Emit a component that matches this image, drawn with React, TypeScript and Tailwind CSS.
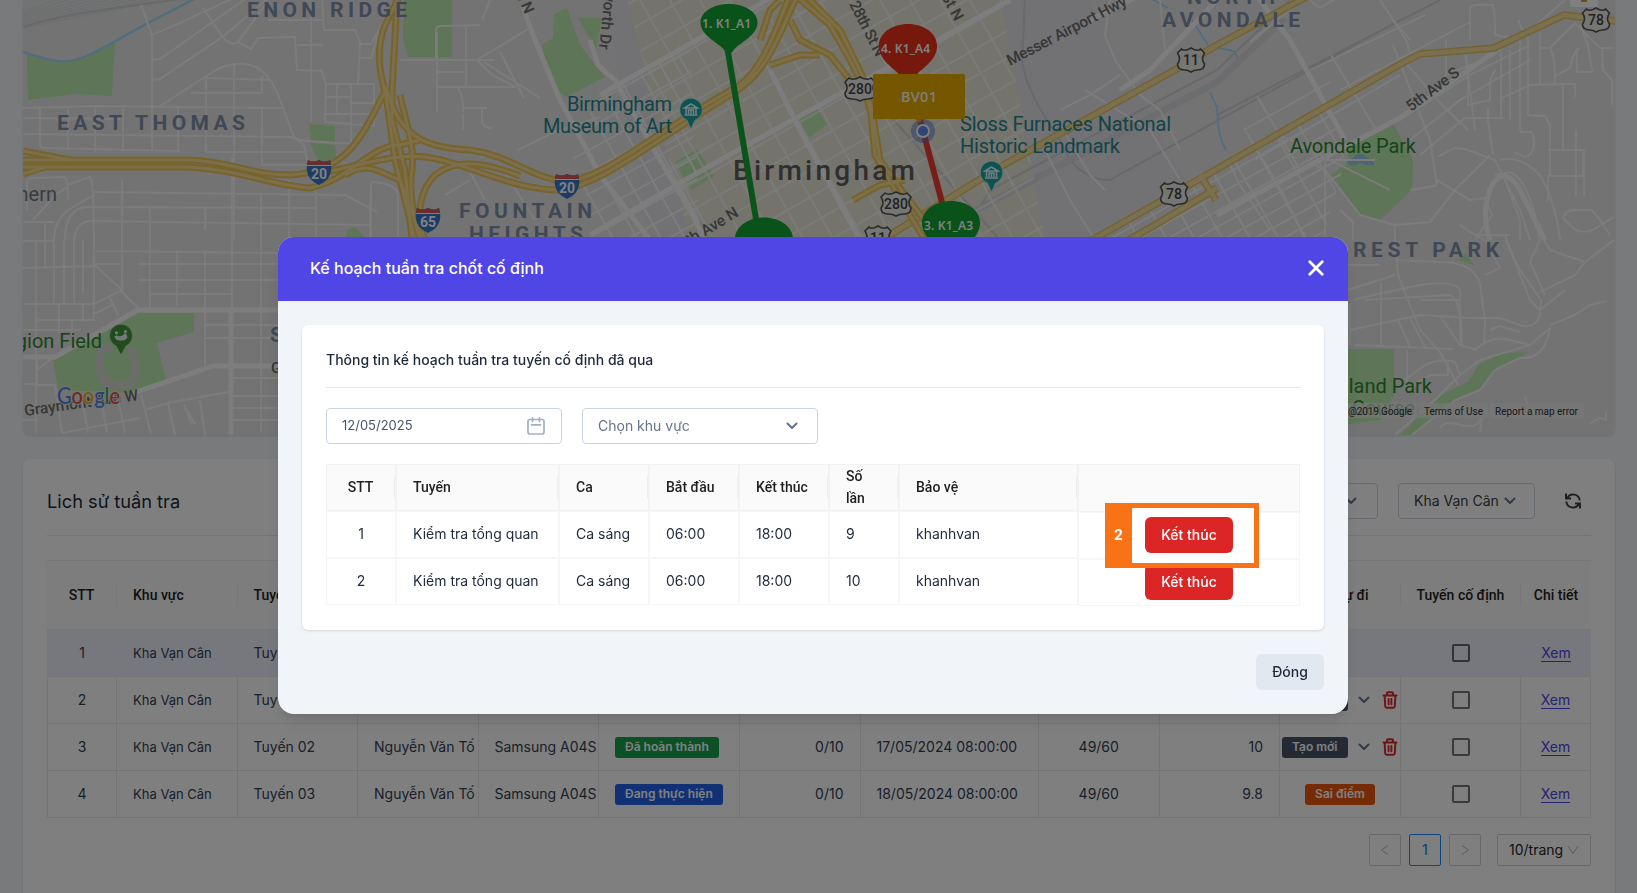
import React from "react";

const fan = (n: number, f: (i: number) => string) => Array.from({ length: n }, (_, i) => f(i)).join(" ");

const INTERSTATES: [string, number, number][] = [["20", 319, 172], ["20", 567, 186], ["65", 428, 220]];
const US_ROUTES: [string, number, number, number][] = [
  ["280", 860, 89, 30], ["280", 896, 204, 30], ["11", 878, 238, 26], ["11", 1191, 60, 27], ["78", 1174, 194, 27], ["78", 1596, 20, 27],
];

const MINOR_ROADS = [
  "M152 35V150", "M152 35L141 5", "M152 35L182 22L240 -5", "M152 60L160 59L248 -3", "M152 80L160 79L225 35L270 -3",
  "M203 8L222 36Q230 47 238 42L265 5", "M238 42L251 49L258 38L295 37L297 70L322 71L326 85L325 122L374 126L374 84L326 84",
  "M268 20H322M311 0V122M322 0L324 30L355 30L360 42L358 85M360 44L371 44L390 10M358 58L371 58L378 34M297 45H323",
  "M160 106L205 77Q225 62 245 64Q268 66 280 100L294 137L304 145L308 163M205 78L270 80M234 64V240M206 78V152M191 93H262V76",
  "M23 108L95 106L282 108M23 118L120 119M23 134L290 137L305 141L356 144M40 108V145Q40 148 45 148L180 151M68 107V150M95 107V152M123 108V152M178 108V152M262 109V165M261 165H308M206 152H305",
  "M337 85V114M351 85V150M326 97H351M351 103H375M326 114H374",
  "M27 210V182Q27 178 35 178L64 177Q68 177 68 200M67 185L90 177Q94 180 94 250",
  "M33 220L55 195L68 187M54 240Q54 222 68 210L94 195M65 240Q65 210 85 207L315 208M74 240Q76 222 90 221L370 225",
  "M94 192L345 195L377 212M205 208Q206 215 205 230M122 180V240M150 205V310M177 250V306M205 250V366M232 158V435M261 195V366M289 180V240M316 190V240M371 183V240",
  "M23 222H54M45 222V240M398 240V195Q396 183 372 182Q370 184 370 240",
  "M23 241H54V250M94 230V305M94 251L278 253M94 264H122M138 264H278M138 280H278M150 294H232M122 240V292L138 308M23 268L96 266L122 290",
  "M23 304H94L122 290M36 241V433M45 240V268M54 250V304M64 240V304M74 240V304M83 240V293M38 320H94V305M59 304V333M83 304V322M23 330H80M72 320V335M110 298L118 315M94 314L112 305",
  "M23 384H37V356M37 370L52 358M23 420H38M37 385L55 385L62 433M82 398L88 433M100 393L107 433M118 398L125 433M62 433L140 418",
  "M141 395L150 430L152 433M145 410L168 403L175 435M168 403L228 392M200 400L205 435M187 410L195 424M184 405L192 425M205 325H278M205 338H278M232 378H278M232 396H278M232 408H278M232 420H278M261 366V433",
  "M436 60V30Q436 26 441 26L480 25M400 60H495M437 32V112M466 26V86M477 60L492 75L516 87M437 72H466M437 87H515M457 87Q463 92 463 112M463 108H487M463 130V114M482 109V120Q482 128 492 128",
  "M490 0L482 20M477 60L530 28M484 62L540 98M500 52L524 98M518 150L555 132L600 117M500 165L535 220M430 183L440 172Q460 165 470 172L485 200M445 195L470 180",
  "M1110 0L1105 35L1115 60L1140 95L1160 110L1180 150M1160 0L1165 50M1120 75L1090 95L1060 110M1085 90L1150 130L1180 180M1060 125L1090 175L1105 190M1040 140L1070 200L1095 240",
  "M1380 0L1406 40L1412 60M1393 20L1410 40M1310 0L1320 8L1340 -4M1250 42L1302 0M1331 55L1375 128M1257 96L1300 170M1244 128L1284 195L1305 240M1230 165L1240 185L1270 230",
  "M1310 70L1425 15M1340 90L1470 22M1244 130L1330 82M1255 160L1400 75M1280 135L1390 190M1405 62L1442 105L1468 130",
  "M1393 45L1430 140L1437 185M1405 60L1465 50L1475 130M1446 40V75L1495 55M1470 40V10Q1470 5 1477 5L1492 5Q1495 6 1495 35L1512 38",
  "M1400 120L1470 75L1530 45M1410 140L1460 100L1530 60M1420 155L1465 118H1505M1468 70V105L1490 100V80L1495 70M1501 52V118M1510 50V120M1520 35V130",
  "M1528 32V115L1545 116L1550 125V175M1540 32V84M1502 98L1530 85L1563 84V150M1518 20L1525 35L1565 0M1541 48L1550 48L1575 23L1600 48H1614M1550 48Q1555 55 1555 83",
  "M1577 48V72H1592L1588 45L1580 25M1602 48L1603 70L1612 80V105M1555 76L1570 68Q1574 50 1580 48M1564 84H1575V97M1576 130V197M1584 150V197M1548 150H1583V176H1548M1548 176V201M1520 132H1530Q1534 132 1534 145Q1532 156 1525 157L1515 152",
  "M1437 157L1455 148L1465 149L1495 160L1520 210L1530 240M1488 108V120L1493 155M1436 185L1413 190M1375 160L1325 160M1325 162V240M1315 165L1325 170L1360 215L1395 225L1430 222L1455 190L1490 155",
  "M1410 190L1436 186L1437 180L1470 200L1485 198L1492 215L1475 240M1495 175L1510 172Q1530 180 1540 240M1500 160Q1520 155 1540 175Q1555 200 1560 240M1505 180L1520 220V240M1340 210L1353 222V240M1460 225L1475 235H1510",
  "M1563 218Q1565 210 1575 210H1592L1600 220L1610 235M1563 218L1575 230Q1590 235 1600 225L1614 217M1395 225V240",
  "M1395 240L1398 275L1420 330L1440 352L1458 385M1348 290L1395 275M1348 265H1380M1354 300L1360 298L1420 285Q1455 280 1460 290L1460 345L1477 350",
  "M1350 330L1420 315L1470 318L1500 318L1520 325Q1535 330 1540 315L1541 300L1520 270L1505 240M1381 283V345M1355 345L1453 349M1350 303V345M1365 300L1450 295Q1462 300 1462 345",
  "M1395 260L1440 262Q1475 262 1480 285L1485 320L1484 345M1485 275L1500 268L1485 240L1470 232M1440 316L1460 345M1398 320L1410 347M1410 318L1425 347M1420 300L1460 300",
  "M1475 350Q1490 335 1510 340L1530 345L1550 328M1490 330L1500 326L1520 332M1505 235L1520 275L1530 300L1540 310L1565 290M1540 292L1575 275L1585 262L1614 240M1535 225L1550 250L1585 262M1540 240L1530 262L1545 295",
  "M1550 325L1575 315L1590 305L1607 301M1405 380L1425 365Q1440 358 1455 362L1460 375M1407 350V385M1407 390L1430 375H1448V362M1530 345L1480 360L1460 375L1435 400L1395 435",
  "M1550 328Q1545 360 1520 358L1495 370L1480 390L1455 400L1412 435M1440 428Q1445 420 1460 425Q1480 430 1482 415L1480 433M1525 396L1530 415M1590 424Q1600 415 1606 420V412",
];

const MAIN_ROADS = [
  "M522 5L535 40L560 100L600 175L650 240", "M590 40L598 65L615 80L660 160L690 210L705 240", "M600 95L820 -30", "M590 235L720 160L1010 0",
  "M1256 -5L1290 40L1345 140", "M1217 215L1320 160L1400 118L1500 48", "M138 310H278", "M23 357H55L138 310", "M278 366H213L133 393", "M231 310V435",
  "M1217 0L1150 70L1120 90", "M1090 20L1160 -15", "M770 70L800 130L860 240", "M1490 240Q1480 210 1492 185Q1505 165 1520 190L1545 240",
];

const HIGHWAYS = [
  "M23 151L70 160", "M23 160H190C230 161 250 175 290 175C350 173 365 130 388 85",
  "M23 167H190C240 170 270 185 310 188C350 180 370 145 400 145L420 140", "M23 174L45 167",
  "M400 -5L385 25C375 50 380 75 386 95L395 160L415 240", "M397 0L392 90L392 120L405 170L412 240",
  "M325 172C350 168 370 160 400 157C450 150 500 190 560 190C600 185 640 150 735 92C770 70 780 30 798 -5",
  "M387 90C400 140 430 148 470 150C510 155 530 178 567 182C610 175 650 135 740 85C765 65 775 30 790 -5",
  "M345 175C370 160 380 173 400 180L422 240", "M400 95C405 120 415 145 412 170C408 190 415 225 420 240", "M425 240C415 215 420 190 435 175C455 160 480 160 520 176",
  "M760 40L770 10L780 0", "M790 20L800 40L830 55L850 80", "M770 65L800 55H820",
  "M795 -5L830 25L850 60L865 90L871 115L875 155L895 190L925 240", "M805 -5L840 30L862 75L872 110L880 160L905 195L940 240",
  "M853 200L880 185L905 180",
];

const US_HIGHWAYS = ["M1308 -4L1217 45L1175 70L1000 167L885 238", "M1616 21L1564 15L1494 48L1447 52L1420 54L1404 62L1217 169L1133 217L1085 244", "M1217 188L1150 228L1125 242", "M1200 175L1216 200"];

const PARKS = [
  "M27 54L65 62L85 56L115 42L112 96L75 94L28 100Z", "M404 0H452V57H408L403 40Z", "M554 14L567 8L580 45L605 77L567 97L552 88L542 45L553 38Z",
  "M578 18H602L596 50Z", "M309 124L335 126V142L311 140ZM310 143L335 145L337 163L318 160Z", "M675 162L697 149L714 176L691 190L681 173Z", "M799 119L817 109L827 124L809 138Z",
  "M1393 123L1413 160L1412 190L1380 220L1361 215L1331 175L1350 160L1345 145Z", "M53 360L107 330L138 313H194V332L157 343L166 380L133 393L58 390Z",
  "M1348 349H1394V395L1380 420L1348 424Z", "M1400 435L1440 395L1468 382L1478 365L1500 353L1530 352L1500 366L1480 390L1455 400L1412 435Z", "M1458 260L1465 253L1475 266ZM347 230L355 227L367 240H347Z",
];

function InterstateShield({ label, x, y }: { label: string; x: number; y: number }) {
  return (
    <g transform={`translate(${x} ${y})`}>
      <path d="M-11 -12Q-6 -9 0 -12Q6 -9 11 -12Q13 -5 12 -1Q11 8 0 13Q-11 8 -12 -1Q-13 -5 -11 -12Z" fill="#3878d0" />
      <path d="M-11 -12Q-6 -9 0 -12Q6 -9 11 -12L12 -7H-12Z" fill="#d85858" />
      <path d="M-12 -6.5H12" stroke="#fff" strokeWidth="1" />
      <text y="7" textAnchor="middle" fontSize="14" fontWeight="700" fill="#fff">{label}</text>
    </g>
  );
}

function RouteShield({ label, x, y, w }: { label: string; x: number; y: number; w: number }) {
  const h = w / 2;
  return (
    <g transform={`translate(${x} ${y})`}>
      <path
        d={`M${-h + 4} -11Q${-h / 2} -8 0 -12Q${h / 2} -8 ${h - 4} -11L${h} -7Q${h - 4} -1 ${h} 4Q${h} 10 ${h - 7} 10Q3 10 0 12Q-3 10 ${-h + 7} 10Q${-h} 10 ${-h} 4Q${-h + 4} -1 ${-h} -7Z`}
        fill="#ededE8" stroke="#555" strokeWidth="1.6"
      />
      <text y="5" textAnchor="middle" fontSize="14" fontWeight="500" fill="#444">{label}</text>
    </g>
  );
}

function Museum({ x, y }: { x: number; y: number }) {
  return (
    <g transform={`translate(${x} ${y})`}>
      <path d="M0 19L-4 10A11.2 11.2 0 1 1 4 10Z" fill="#18a8a8" stroke="#d5eeee" strokeWidth="0.6" />
      <path d="M-6.500 -2L0 -6L6.500 -2ZM-6.500 5H6.500M-5 -2V4M5 -2V4M-2.500 4V0H2.500V4M0 0V4" fill="none" stroke="#e8ffff" strokeWidth="1.500" />
    </g>
  );
}

function RoutePin({ x, y, label, color, tall = true }: { x: number; y: number; label: string; color: string; tall?: boolean }) {
  return (
    <g transform={`translate(${x} ${y})`}>
      <path
        transform={tall ? "scale(1.02 1.19)" : undefined}
        d="M-28.500 0C-28.500 -11 -15 -18.500 0 -18.500S28.500 -11 28.500 0C28.500 13 11 20 5 27Q3 31 0 31T-5 27C-11 20 -28.500 13 -28.500 0Z"
        fill={color}
      />
      <text x="-27" y={tall ? 6.5 : 5.5} fontFamily="Noto Sans" fontSize="12" fontWeight="600" fill="#fff" textLength="49">{label}</text>
    </g>
  );
}

function CityMap() {
  return (
    <svg viewBox="23 0 1592 435" width="1592" height="435" className="block rounded-b-lg bg-[#e7e7e7]" fontFamily="Roboto, sans-serif">
      <defs>
        <clipPath id="grid-west"><path d="M600 95L690 45L700 240H600L570 150Z" /></clipPath>
        <clipPath id="downtown"><path d="M627 0H1001L1045 240H690Z" /></clipPath>
        <clipPath id="grid-south"><path d="M1217 170L1330 108L1345 160L1322 240H1100Z" /></clipPath>
      </defs>
      <path d="M605 0H627L700 240H650Z M1001 0H1090L1217 240H1045Z" fill="#e4e4ea" />
      <path d="M627 0H1001L1045 240H690Z" fill="#e8e6d8" />
      {PARKS.map((d) => <path key={d} d={d} fill="#bdecae" />)}
      <path d="M23 52C40 57 55 63 68 61C90 58 105 46 150 22L200 -4" fill="none" stroke="#a4dcfa" strokeWidth="2.500" />
      <path d="M1150 -2L1168 8M1192 20L1208 45M1210 92L1217 108L1219 120M1218 48L1234 51L1240 61M1217 105Q1217 135 1226 150" fill="none" stroke="#a4dcfa" strokeWidth="1.800" />
      <path d="M1347 161Q1352 158 1354 157Q1360 151 1366 157Q1374 160 1374 165Q1366 166 1360 163Q1350 169 1347 161Z" fill="#9cc8ee" />
      <g fill="none" stroke="#dcdee0" strokeWidth="1.500">
        <path d={fan(9, (i) => `M23 ${12 + i * 2}L${60 + i * 14} ${-2}`)} />
        <path d="M23 27C60 15 90 12 130 6L190 -2M1025 0L1022 60Q1025 90 1060 140Q1075 180 1110 180L1400 20M885 110L1000 240M1290 0L1217 70L990 190L960 240M1217 115L1440 0" stroke="#cfd2d4" strokeWidth="2" />
      </g>
      <path d="M935 232L1217 82L1285 18" fill="none" stroke="#dadbe0" strokeWidth="7" />
      <g fill="none" stroke="#f8f8f8" strokeWidth="1.900">
        <g clipPath="url(#downtown)" strokeWidth="2.200" opacity="0.75">
          <path d={fan(24, (i) => `M${520 + i * 30} 0l145 260`)} />
          <path d={fan(20, (i) => `M600 ${20 + i * 27}l500 -285`)} />
        </g>
        <g clipPath="url(#grid-west)">
          <path d={fan(10, (i) => `M${480 + i * 24} 0l145 260`)} />
          <path d={fan(12, (i) => `M560 ${100 + i * 22}l200 -110`)} />
        </g>
        <g clipPath="url(#grid-south)">
          <path d={fan(12, (i) => `M${1060 + i * 28} 100l85 150`)} />
          <path d={fan(9, (i) => `M1090 ${250 + i * 16}l260 -145`)} />
        </g>
        {MINOR_ROADS.map((d) => <path key={d} d={d} />)}
      </g>
      <g fill="none" stroke="#fbfbfb" strokeWidth="5">{MAIN_ROADS.map((d) => <path key={d} d={d} />)}</g>
      <path d="M103 346Q95 365 105 383Q120 388 132 382Q139 365 130 347M103 346L112 350" fill="none" stroke="#d8dbd6" strokeWidth="8" />
      <g fill="none" strokeLinejoin="round">
        {US_HIGHWAYS.map((d) => <path key={d} d={d} stroke="#e6c668" strokeWidth="7.500" />)}
        {US_HIGHWAYS.map((d) => <path key={d} d={d} stroke="#f6e09a" strokeWidth="4.500" />)}
        {HIGHWAYS.map((d) => <path key={d} d={d} stroke="#efc658" strokeWidth="7" />)}
        {HIGHWAYS.map((d) => <path key={d} d={d} stroke="#f8de92" strokeWidth="3" />)}
      </g>

      <g fontSize="21" fontWeight="700" fill="#8090ac">
        <text x="247" y="17" textLength="160">ENON RIDGE</text>
        <text x="57" y="130" textLength="188">EAST THOMAS</text>
        <text x="459" y="218" textLength="133">FOUNTAIN</text>
        <text x="469" y="241" textLength="114">HEIGHTS</text>
        <text x="1187" y="4" textLength="88">NORTH</text>
        <text x="1162" y="27" textLength="138">AVONDALE</text>
        <text x="1353" y="257" textLength="146">REST PARK</text>
        <text x="270" y="342">S</text>
      </g>
      <text x="733" y="180" fontSize="28" fontWeight="500" fill="#605e5a" textLength="182">Birmingham</text>
      <g fontSize="20" fill="#228890">
        <text x="567" y="111" textLength="105">Birmingham</text>
        <text x="543" y="133" textLength="129">Museum of Art</text>
        <text x="960" y="131" textLength="211">Sloss Furnaces National</text>
        <text x="960" y="153" textLength="160">Historic Landmark</text>
      </g>
      <g fontSize="20" fill="#2c8830">
        <text x="1290" y="153" textLength="126">Avondale Park</text>
        <text x="102" y="348" textAnchor="end">Legion Field</text>
        <text x="1432" y="393" textAnchor="end">Highland Park</text>
        <text x="1352" y="415">Course</text>
      </g>
      <g fontSize="15.500" fontWeight="500" fill="#6e6e6c">
        <text transform="translate(1010 66) rotate(-27.500)" textLength="133">Messer Airport Hwy</text>
        <text transform="translate(1411 112) rotate(-37)" textLength="62">5th Ave S</text>
        <text transform="translate(849 4) rotate(63)" textLength="60">28th St N</text>
        <text transform="translate(941 -4) rotate(62)">St N</text>
        <text transform="translate(513 -12) rotate(66)">St N</text>
        <text transform="translate(599 49) rotate(96)" textAnchor="end">Ellsworth Dr</text>
        <text transform="translate(682 250) rotate(-31)">4th Ave N</text>
        <text transform="translate(25 416) rotate(-8)">Graymont Ave W</text>
        <text x="271" y="373">G</text>
      </g>
      <text x="57" y="201" fontSize="20" fill="#6c7a84" textAnchor="end">Southern</text>

      {INTERSTATES.map(([label, x, y]) => <InterstateShield key={label + x} label={label} x={x} y={y} />)}
      {US_ROUTES.map(([label, x, y, w]) => <RouteShield key={label + x} label={label} x={x} y={y} w={w} />)}
      <Museum x={691} y={110} />
      <Museum x={991.5} y={173} />
      <g transform="translate(121 336)">
        <path d="M0 19L-5 10A11.500 11.500 0 1 1 5 10Z" fill="#40983c" stroke="#d2ead0" strokeWidth="0.700" />
        <path d="M-6.500 0Q-4 -1 -3 0Q1 1 3 -2L4 -3Q6 -2 6.500 1Q5 5 0 4.500Q-6 5 -6.500 0Z" fill="#e6f4e6" />
        <circle cx="-4.500" cy="-3.200" r="1.600" fill="#e6f4e6" />
        <circle cx="4.500" cy="-4.500" r="1.600" fill="#e6f4e6" />
      </g>

      <path d="M726 40L757 225" stroke="#14a634" strokeWidth="6" />
      <path d="M918 112L944 210" stroke="#ee3c30" strokeWidth="6" />
      <RoutePin x={729} y={22.5} label="1. K1_A1" color="#12a432" tall={false} />
      <RoutePin x={764} y={239.5} label="2. K1_A2" color="#12a432" />
      <RoutePin x={951} y={223} label="3. K1_A3" color="#12a432" />
      <RoutePin x={908} y={46} label="4. K1_A4" color="#ec3018" />
      <circle cx="923" cy="131" r="12" fill="#5678c8" fillOpacity="0.5" />
      <circle cx="923" cy="131" r="6" fill="#5a88ea" stroke="#fff" strokeWidth="1.800" />
      <path d="M914 118H924L919 123Z" fill="#e8ae00" />
      <rect x="873" y="74" width="92" height="45" rx="1.500" fill="#e8ae00" />
      <text x="901" y="101.500" fontFamily="Noto Sans" fontSize="14.500" fontWeight="500" fill="#fff" textLength="36">BV01</text>

      <text x="57" y="404" fontFamily="Lato" fontSize="22.500" textLength="63" lengthAdjust="spacingAndGlyphs" stroke="#e8e8e8" strokeWidth="2" paintOrder="stroke" fontWeight="500">
        <tspan fill="#4f86ec">G</tspan><tspan fill="#e84c40">o</tspan><tspan fill="#f0b414">o</tspan><tspan fill="#4f86ec">g</tspan><tspan fill="#3ca85a">l</tspan><tspan fill="#e84c40">e</tspan>
      </text>
      <rect x="1340" y="403" width="244" height="15" fill="#f0f0f0" fillOpacity="0.7" />
      <path d="M1418 403V418M1489 403V418" stroke="#e0e0e0" />
      <g fontSize="10" fill="#333">
        <text x="1348" y="415" textLength="64">@2019 Google</text>
        <text x="1424" y="415" textLength="59">Terms of Use</text>
        <text x="1495" y="415" textLength="83">Report a map error</text>
      </g>
      <path d="M1570 -10H1598V5Q1598 7 1596 7H1572Q1570 7 1570 5Z" fill="#fff" />
      <path d="M1581 -2H1587V2H1581Z" fill="#d8a020" />
    </svg>
  );
}

function Chevron({ className }: { className: string }) {
  return (
    <svg viewBox="0 0 12 8" className={className} fill="none" stroke="currentColor" strokeWidth="2" strokeLinecap="round" strokeLinejoin="round">
      <path d="M1.500 1.500L6 6L10.500 1.500" />
    </svg>
  );
}

function Trash() {
  return (
    <svg viewBox="0 0 16 18" className="h-[18px] w-4 text-[#dc2626]" fill="none" stroke="currentColor" strokeWidth="1.900" strokeLinejoin="round" strokeLinecap="round">
      <path d="M1.500 4.500H14.500M5 4.500V2.200Q5 1.200 6 1.200H10Q11 1.200 11 2.200V4.500M2.600 4.500L3.200 15.300Q3.300 16.800 4.800 16.800H11.200Q12.700 16.800 12.800 15.300L13.400 4.500M6.600 8V13.300M9.400 8V13.300" />
    </svg>
  );
}

function Tag({ color, children }: { color: string; children: React.ReactNode }) {
  return <span className={`inline-flex h-[21px] items-center rounded-[3px] px-2.5 text-xs font-semibold text-white ${color}`}>{children}</span>;
}

type Patrol = { id: number; route: string; tag?: React.ReactNode; date: string; order: string; action: React.ReactNode };

const CREATE = (
  <div className="flex items-center pl-0.5">
    <Tag color="bg-[#475569]">Tạo mới</Tag>
    <Chevron className="ml-2.5 h-2 w-3 text-[#64748b]" />
    <span className="ml-3"><Trash /></span>
  </div>
);

const PATROLS: Patrol[] = [
  { id: 1, route: "Tuyến 01", date: "15/05/2024 08:00:00", order: "10", action: null },
  { id: 2, route: "Tuyến 01", date: "16/05/2024 08:00:00", order: "10", action: CREATE },
  { id: 3, route: "Tuyến 02", tag: <Tag color="bg-[#16a34a]">Đã hoàn thành</Tag>, date: "17/05/2024 08:00:00", order: "10", action: CREATE },
  { id: 4, route: "Tuyến 03", tag: <Tag color="bg-[#2563eb]">Đang thực hiện</Tag>, date: "18/05/2024 08:00:00", order: "9.8", action: <Tag color="bg-[#ea580c]">Sai điểm</Tag> },
];

const HEADS = ["STT", "Khu vực", "Tuyến", "Bảo vệ", "Thiết bị", "Trạng thái", "Số điểm", "Bắt đầu", "Thời gian", "Điểm", "Thứ tự đi", "Tuyến cố định", "Chi tiết"];
const ROW = "grid grid-cols-[70px_120.5px_120.5px_120.5px_120.5px_141px_120.5px_178.5px_120.5px_120.5px_121px_120px_70px]";

function PatrolRow({ p }: { p: Patrol }) {
  const active = p.id === 1;
  const cell = `flex items-center border-b border-[#ebebeb] whitespace-nowrap ${active ? "" : "border-r"}`;
  return (
    <div className={`${ROW} h-[47px] text-sm text-[#334155] ${active ? "bg-[#eef0fd]" : ""}`}>
      <div className={`${cell} justify-center ${active ? "" : "border-l"}`}>{p.id}</div>
      <div className={`${cell} pl-4 text-[13px]`}>Kha Vạn Cân</div>
      <div className={`${cell} pl-4`}>{p.route}</div>
      <div className={`${cell} pl-4`}>Nguyễn Văn Tố</div>
      <div className={`${cell} pl-4`}>Samsung A04S</div>
      <div className={`${cell} pl-4`}>{p.tag}</div>
      <div className={`${cell} justify-end pr-4`}>0/10</div>
      <div className={`${cell} pl-4`}>{p.date}</div>
      <div className={`${cell} justify-center`}>49/60</div>
      <div className={`${cell} justify-end pr-4`}>{p.order}</div>
      <div className={`${cell} ${p.id === 4 ? "justify-center" : ""}`}>{p.action}</div>
      <div className={`${cell} justify-center`}><span className={`size-[18px] rounded-[2px] border-2 ${active ? "border-[#666]" : "border-[#747474]"}`} /></div>
      <div className={`${cell} justify-center`}><a className="border-b border-[#4f46e5] leading-[17px] text-[#4f46e5]">Xem</a></div>
    </div>
  );
}

function History() {
  return (
    <section className="mt-6 h-[520px] rounded-lg bg-white px-6 pt-6 shadow-sm">
      <div className="flex h-[53px] items-start border-b border-[#e2e8f0]">
        <h2 className="flex-1 text-[18.250px] leading-9 text-[#1e293b]">Lich sử tuần tra</h2>
        <div className="flex h-9 w-[137px] items-center justify-end rounded border border-[#cbd5e1] pr-5 text-[#64748b]"><Chevron className="h-2 w-3" /></div>
        <div className="ml-5 flex h-9 w-[137px] items-center rounded border border-[#cbd5e1] pl-[15px] text-sm text-[#404040]">
          Kha Vạn Cân<Chevron className="ml-[5px] h-2 w-3 text-[#64748b]" />
        </div>
        <div className="flex h-9 w-14 items-center justify-end pr-[9px] text-[#404040]">
          <svg viewBox="0 0 18 18" className="size-[18px]" fill="none" stroke="currentColor" strokeWidth="2">
            <path d="M2 1.500V6.500H7M3.200 6.200A6.600 6.600 0 0 1 15.700 8.500M16 16.500V11.500H11M14.800 11.800A6.600 6.600 0 0 1 2.300 9.500" />
            <path d="M2 4L4.500 6.500H2ZM16 14L13.500 11.500H16Z" fill="currentColor" stroke="none" />
          </svg>
        </div>
      </div>
      <div className="mt-6">
        <div className={`${ROW} h-[70px] border-t border-b border-[#ececec] bg-[#fafafa] font-[Roboto,sans-serif] text-sm font-medium text-[#1f1f1f]`}>
          {HEADS.map((h, i) => (
            <div key={h} className="flex items-center whitespace-nowrap">
              <span className={`flex-1 ${i === 0 || i >= 10 ? "text-center" : "pl-4"}`}>{h}</span>
              {i < HEADS.length - 1 && <span className="h-[22px] w-px bg-[#efefef]" />}
            </div>
          ))}
        </div>
        {PATROLS.map((p) => <PatrolRow key={p.id} p={p} />)}
      </div>
      <div className="mt-4 flex justify-end gap-2 text-sm">
        <PageButton><path d="M9 1.500L2.500 6L9 10.500" /></PageButton>
        <span className="flex size-8 items-center justify-center rounded-[2px] border border-[#1890ff] font-medium text-[#1890ff]">1</span>
        <PageButton><path d="M3 1.500L9.500 6L3 10.500" /></PageButton>
        <span className="ml-2 flex h-8 w-[94px] items-center justify-between rounded-[2px] border border-[#d0d0d0] px-[11px] text-[#262626]">
          10/trang
          <svg viewBox="0 0 12 12" className="size-3 text-[#b8b8b8]" fill="none" stroke="currentColor"><path d="M1 2L6 9.500L11 2" /></svg>
        </span>
      </div>
    </section>
  );
}

function PageButton({ children }: { children: React.ReactNode }) {
  return (
    <span className="flex size-8 items-center justify-center rounded-[2px] border border-[#d0d0d0] text-[#b8b8b8]">
      <svg viewBox="0 0 12 12" className="size-3" fill="none" stroke="currentColor">{children}</svg>
    </span>
  );
}

const PLAN: { head: string; width: string; align: string; values: string[] }[] = [
  { head: "STT", width: "w-[70px]", align: "justify-center", values: ["1", "2"] },
  { head: "Tuyến", width: "w-[163px]", align: "pl-4", values: ["Kiểm tra tổng quan", "Kiểm tra tổng quan"] },
  { head: "Ca", width: "w-[90px]", align: "pl-4", values: ["Ca sáng", "Ca sáng"] },
  { head: "Bắt đầu", width: "w-[90px]", align: "pl-4", values: ["06:00", "06:00"] },
  { head: "Kết thúc", width: "w-[90px]", align: "pl-4", values: ["18:00", "18:00"] },
  { head: "Số lần", width: "w-[70px]", align: "pl-4", values: ["9", "10"] },
  { head: "Bảo vệ", width: "w-[179px]", align: "pl-4", values: ["khanhvan", "khanhvan"] },
];

function EndButton() {
  return <button className="h-9 w-[88px] rounded-md bg-[#dc2626] text-sm font-medium text-white">Kết thúc</button>;
}

function PlanTable() {
  return (
    <div className="mt-5 flex text-sm text-[#1e293b]">
      {PLAN.map((c) => (
        <div key={c.head} className={c.width}>
          <div className="flex h-[47px] items-center border border-[#f2f2f2] bg-[#fafafa] pb-px font-[Roboto,sans-serif] font-medium text-[#1f1f1f]">
            <span className={`flex flex-1 leading-[22px] ${c.align} ${c.head === "Số lần" ? "pr-5" : ""}`}>{c.head}</span>
            <span className="h-[22px] w-px bg-[#eeeeee]" />
          </div>
          {c.values.map((v, i) => <div key={i} className={`flex h-[47px] items-center border border-[#f6f6f6] pb-px ${c.align}`}>{v}</div>)}
        </div>
      ))}
      <div className="w-[222px]">
        <div className="h-12 border border-[#f2f2f2] bg-[#fafafa]" />
        <div className="relative flex h-[47px] items-center justify-center border border-[#f6f6f6]">
          <div className="absolute top-[-10px] left-[26px] z-10 flex h-[65px] w-[154px] items-center border-5 border-l-0 border-[#f97316] bg-white">
            <span className="flex h-full w-[27px] shrink-0 items-center justify-center bg-[#f97316] pb-px font-bold text-white">2</span>
            <span className="flex flex-1 pb-px pl-[13px]"><EndButton /></span>
          </div>
        </div>
        <div className="flex h-[47px] items-center justify-center border border-[#f6f6f6] pb-px"><EndButton /></div>
      </div>
    </div>
  );
}

function PlanDialog() {
  return (
    <div className="fixed inset-0 flex items-start justify-center bg-black/50 pt-[237px] pr-[11px]">
      <div role="dialog" className="h-[477px] w-[1070px] overflow-hidden rounded-2xl bg-[#f1f5f9] shadow-lg">
        <header className="flex h-16 items-center justify-between bg-[#4f46e5] pr-6 pb-0.5 pl-8 text-white">
          <h1 className="text-base font-medium">Kế hoạch tuần tra chốt cố định</h1>
          <svg viewBox="0 0 16 16" className="size-4" fill="none" stroke="currentColor" strokeWidth="2.800" strokeLinecap="round"><path d="M1.800 1.800L14.200 14.200M14.200 1.800L1.800 14.200" /></svg>
        </header>
        <div className="p-6">
          <section className="h-[305px] rounded-md bg-white px-6 shadow-sm">
            <h3 className="h-[63px] border-b border-[#e2e8f0] pt-[25px] text-sm leading-5 font-medium text-[#1e293b]">Thông tin kế hoạch tuần tra tuyến cố định đã qua</h3>
            <div className="mt-5 flex gap-5">
              <div className="flex h-9 w-[236px] items-center justify-between rounded border border-[#cbd5e1] pr-4 pl-[15px] text-[13px] text-[#475569]">
                12/05/2025
                <svg viewBox="0 0 18 18" className="size-[18px] text-[#a3b1c6]" fill="none" stroke="currentColor" strokeWidth="1.700" strokeLinecap="round">
                  <rect x="1" y="2.500" width="16" height="14.500" rx="2" /><path d="M5.500 0.900V4.500M12.500 0.900V4.500M4.500 7.800H13.500" />
                </svg>
              </div>
              <div className="flex h-9 w-[236px] items-center justify-between rounded border border-[#cbd5e1] pr-[19px] pl-[15px] text-sm text-[#64748b]">
                Chọn khu vực<Chevron className="h-2 w-3" />
              </div>
            </div>
            <PlanTable />
          </section>
          <div className="mt-6 flex justify-end">
            <button className="h-9 w-[68px] rounded-md bg-[#e2e8f0] text-sm font-medium text-[#1e293b]">Đóng</button>
          </div>
        </div>
      </div>
    </div>
  );
}

export default function App() {
  return (
    <main className="h-[893px] overflow-hidden bg-[#f1f5f9] pr-[22px] pl-[23px] font-[Inter,sans-serif]">
      <section className="rounded-b-lg shadow-sm"><CityMap /></section>
      <History />
      <PlanDialog />
    </main>
  );
}
